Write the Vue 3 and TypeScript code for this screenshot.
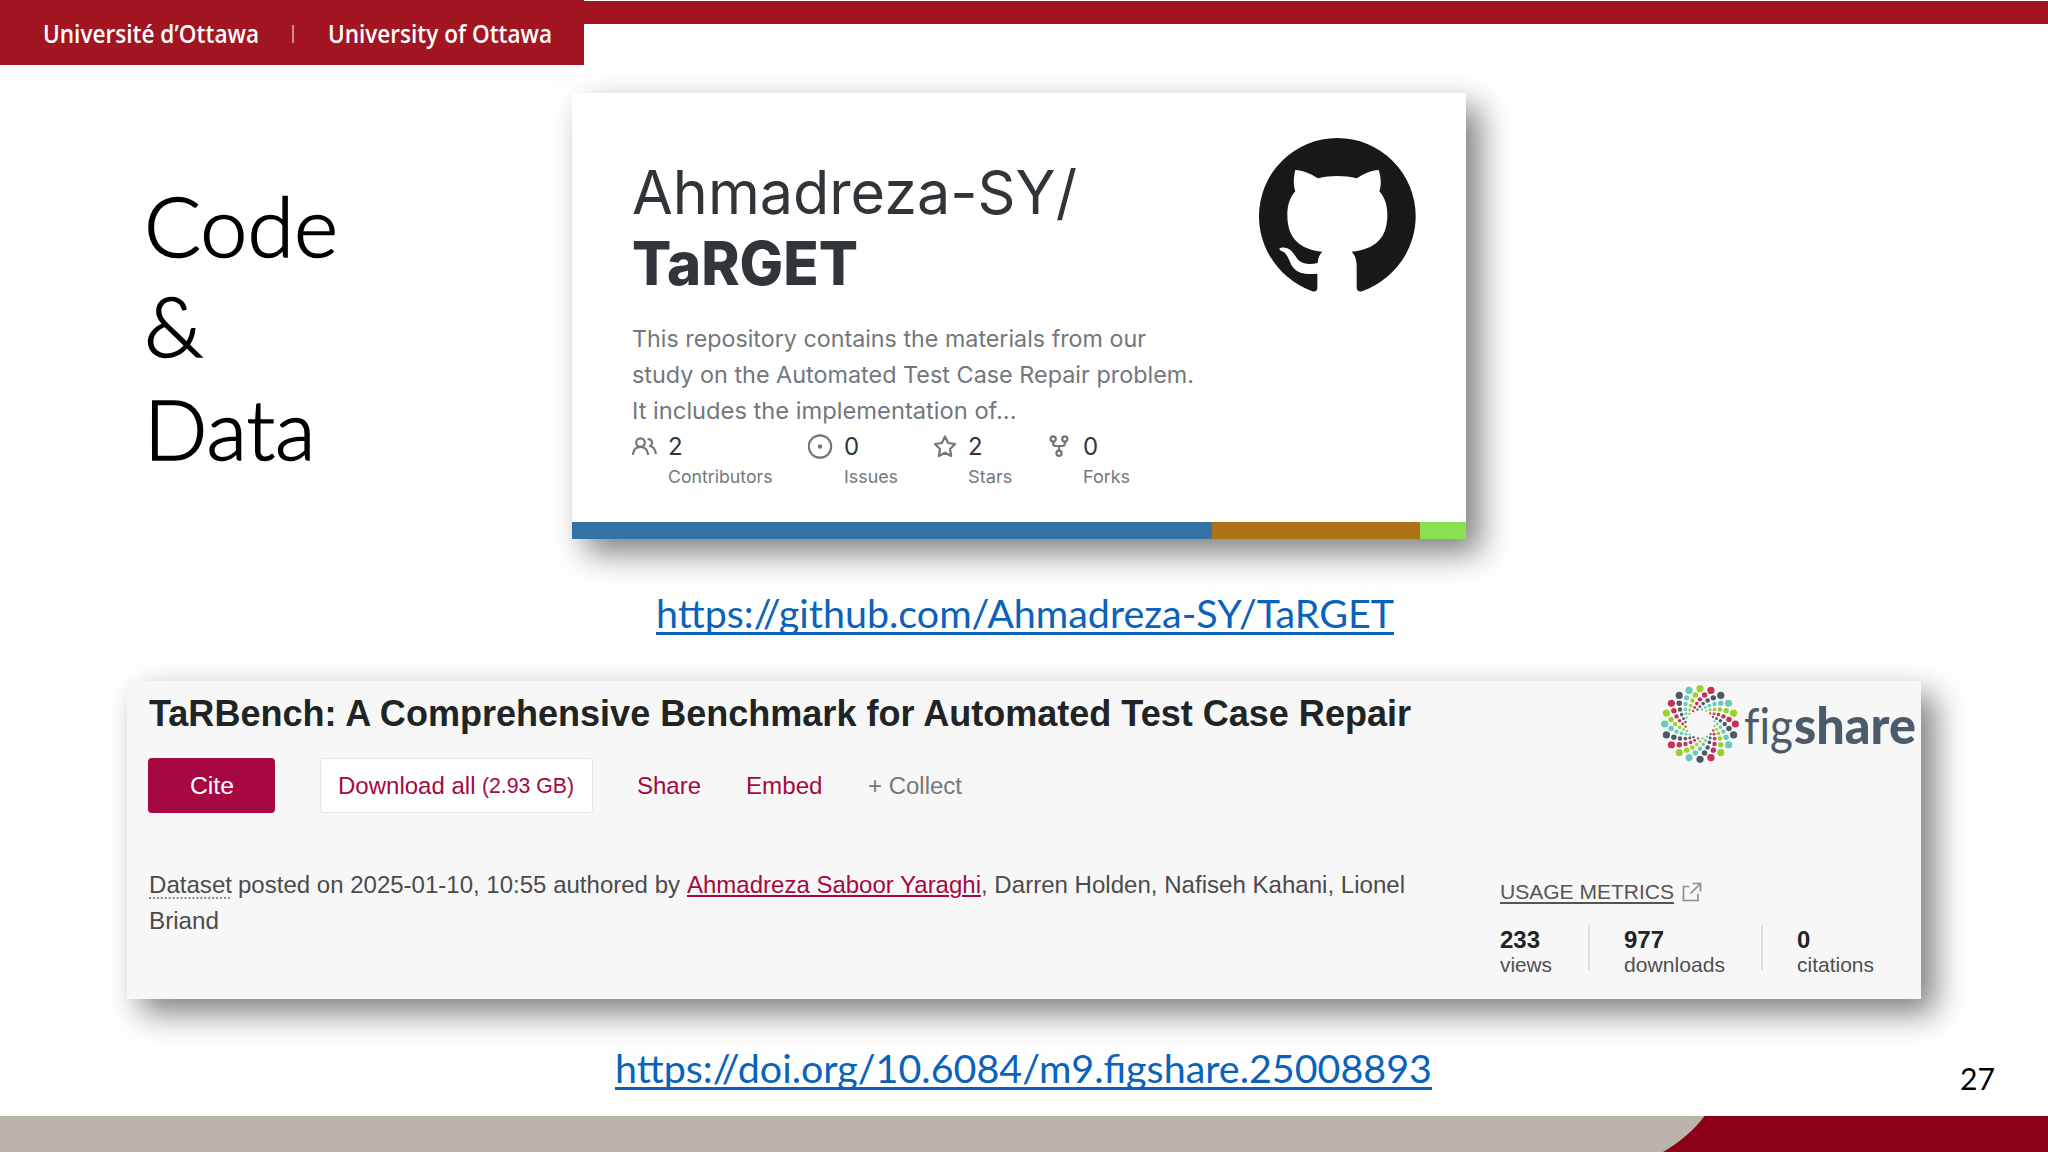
<script setup lang="ts">
interface Dot {
  x: number
  y: number
  r: number
  color: string
}

/** Stretches a single line of text horizontally to the given width in pixels. */
const vFit = {
  mounted(el: HTMLElement, binding: { value: number }) {
    const natural = el.getBoundingClientRect().width
    if (!natural) return
    el.style.transform = `scaleX(${binding.value / natural})`
    el.style.marginRight = `${binding.value - natural}px`
  },
}

const description = [
  { text: 'This repository contains the materials from our', width: 514 },
  { text: 'study on the Automated Test Case Repair problem.', width: 562 },
  { text: 'It includes the implementation of...', width: 384.5 },
]

const stats = [
  { icon: 'people', value: 2, label: 'Contributors', width: 104.5, cell: 176, indent: 36 },
  { icon: 'issue', value: 0, label: 'Issues', width: 54, cell: 125, indent: 36 },
  { icon: 'star', value: 2, label: 'Stars', width: 44.5, cell: 116, indent: 35 },
  { icon: 'fork', value: 0, label: 'Forks', width: 47, cell: 90, indent: 34 },
]

const languages = [
  { color: '#3572a5', width: 640 },
  { color: '#b07219', width: 208 },
  { color: '#89e051', width: 46 },
]

const metrics = [
  { value: '233', label: 'views', width: 52, numWidth: 40, cell: 88 },
  { value: '977', label: 'downloads', width: 101, numWidth: 40, cell: 137 },
  { value: '0', label: 'citations', width: 77, numWidth: 13.3, cell: 90 },
]

const palette = ['#9bd02c', '#c4315a', '#4d5a66', '#68ccb9']
const rings = [
  { radius: 106, turn: 0, r: 10.8 },
  { radius: 88, turn: -9, r: 8.2 },
  { radius: 74, turn: -18, r: 6.6 },
  { radius: 62, turn: -27, r: 5.4 },
  { radius: 52, turn: -36, r: 4.3 },
  { radius: 44, turn: -46, r: 3.5 },
]
const dots: Dot[] = []
for (let arm = 0; arm < 20; arm++) {
  for (const ring of rings) {
    const angle = ((arm * 18 + ring.turn) * Math.PI) / 180
    dots.push({
      x: Math.sin(angle) * ring.radius,
      y: -Math.cos(angle) * ring.radius,
      r: ring.r,
      color: palette[arm % 4],
    })
  }
}
</script>

<template>
  <main class="slide">
    <header class="top">
      <div class="brand">
        <span v-fit="216" class="fit">Université d’Ottawa</span>
        <i class="brand-sep"></i>
        <span v-fit="224" class="fit">University of Ottawa</span>
      </div>
      <div class="strip"></div>
    </header>

    <section class="code-row">
      <h1 class="title">
        <span v-fit="194" class="fit">Code</span>
        <span v-fit="59" class="fit amp">&amp;</span>
        <span v-fit="171.5" class="fit">Data</span>
      </h1>

      <article class="repo">
        <div class="repo-main">
          <div class="repo-text">
            <div class="repo-name"><span v-fit="445" class="fit">Ahmadreza-SY/</span></div>
            <div class="repo-name strong"><span v-fit="226" class="fit">TaRGET</span></div>
            <div class="desc">
              <div v-for="line in description" :key="line.text">
                <span v-fit="line.width" class="fit">{{ line.text }}</span>
              </div>
            </div>
            <div class="stats">
              <div v-for="s in stats" :key="s.label" class="stat" :style="{ width: s.cell + 'px' }">
                <div class="stat-icon" :style="{ width: s.indent + 'px' }">
                  <svg v-if="s.icon === 'people'" width="25" height="18" viewBox="0 0 25 18" class="line">
                    <circle cx="8.5" cy="5.6" r="4.3" />
                    <path d="M1 17c.6-4.500 3.500-7 7.500-7s6.900 2.500 7.500 7M16.500 2.200c3.800.2 5 5 1.500 6.800 3.500 1 5.200 3.700 5.800 7" />
                  </svg>
                  <svg v-else-if="s.icon === 'issue'" width="25" height="25" viewBox="0 0 25 25" class="line">
                    <circle cx="12" cy="12.500" r="11.200" />
                    <circle cx="12" cy="12.500" r="2.200" class="solid" />
                  </svg>
                  <svg v-else-if="s.icon === 'star'" width="24" height="23" viewBox="0 0 24 23" class="line">
                    <path d="M12 1.500l3.100 6.500 7 1-5.100 5 1.200 7-6.200-3.300-6.200 3.300 1.200-7-5.100-5 7-1z" />
                  </svg>
                  <svg v-else width="20" height="22" viewBox="0 0 20 22" class="line">
                    <circle cx="4.200" cy="4" r="2.600" />
                    <circle cx="15.800" cy="4" r="2.600" />
                    <circle cx="10" cy="18.300" r="2.600" />
                    <path d="M4.200 6.600v2.200q0 2.200 2.200 2.200h7.200q2.200 0 2.200-2.200V6.600M10 11v4.700" />
                  </svg>
                </div>
                <div>
                  <div class="stat-value">{{ s.value }}</div>
                  <div class="stat-label"><span v-fit="s.width" class="fit">{{ s.label }}</span></div>
                </div>
              </div>
            </div>
          </div>
          <svg class="mark" width="157" height="154" viewBox="297 174 471 462">
            <path d="M532 174A235 235 0 0 0 297 409C297 512 364 600 457 634Q471 637 472 624L472 581C440 585 414 580 400 563C390 551 388 535 375 519C370 513 360 514 358 507C359 502 372 501 382 505C400 513 404 528 415 540C428 553 450 555 473 549C474 535 478 524 487 515C420 508 382 476 382 405C382 375 390 352 406 334C399 314 401 290 406 270C428 270 452 281 474 295C510 286 554 286 590 295C612 281 634 270 656 270C663 290 665 314 658 334C674 352 682 375 682 405C682 476 644 508 575 515C585 524 590 540 590 558L590 622Q591 637 606 634C700 600 767 512 767 409A235 235 0 0 0 532 174Z" />
          </svg>
        </div>
        <div class="langs">
          <i v-for="l in languages" :key="l.color" :style="{ width: l.width + 'px', background: l.color }"></i>
        </div>
      </article>
    </section>

    <div class="link-row first">
      <a v-fit="738" class="fit url">https://github.com/Ahmadreza-SY/TaRGET</a>
    </div>

    <article class="dataset">
      <div class="ds-main">
        <h2><span v-fit="1262" class="fit">TaRBench: A Comprehensive Benchmark for Automated Test Case Repair</span></h2>
        <div class="actions">
          <div class="cite"><span v-fit="44" class="fit">Cite</span></div>
          <div class="download">
            <span v-fit="137.5" class="fit">Download all</span>
            <small v-fit="92" class="fit">(2.93 GB)</small>
          </div>
          <span v-fit="64" class="fit share">Share</span>
          <span v-fit="76.5" class="fit embed">Embed</span>
          <span v-fit="94" class="fit collect">+ Collect</span>
        </div>
        <div class="meta">
          <div class="meta-line">
            <span v-fit="83" class="fit dotted">Dataset</span>
            <span v-fit="442" class="fit posted">posted on 2025-01-10, 10:55 authored by</span>
            <a v-fit="294" class="fit author">Ahmadreza Saboor Yaraghi</a>
            <span v-fit="424" class="fit">, Darren Holden, Nafiseh Kahani, Lionel</span>
          </div>
          <div class="meta-line"><span v-fit="70" class="fit">Briand</span></div>
        </div>
      </div>

      <aside class="ds-side">
        <div class="logo">
          <svg width="78" height="78" viewBox="-117 -117 234 234">
            <circle v-for="(d, i) in dots" :key="i" :cx="d.x" :cy="d.y" :r="d.r" :fill="d.color" />
          </svg>
          <div class="logo-text">
            <span v-fit="49" class="fit thin">fig</span><span v-fit="122" class="fit heavy">share</span>
          </div>
        </div>
        <div class="usage">
          <span v-fit="174" class="fit under">USAGE METRICS</span>
          <svg width="20" height="20" viewBox="0 0 20 20">
            <path d="M7.500 4.500H1.500V18.500H16V12M10.500 1.500H18.500V9.500M18 2L8.500 11.500" fill="none" stroke="#8d8d8d" stroke-width="1.700" />
          </svg>
        </div>
        <div class="metrics">
          <template v-for="(m, i) in metrics" :key="m.label">
            <i v-if="i" class="divider"></i>
            <div class="metric" :style="{ width: m.cell + 'px' }">
              <div class="num"><span v-fit="m.numWidth" class="fit">{{ m.value }}</span></div>
              <div class="lab"><span v-fit="m.width" class="fit">{{ m.label }}</span></div>
            </div>
          </template>
        </div>
      </aside>
    </article>

    <div class="link-row second">
      <a v-fit="817" class="fit url">https://doi.org/10.6084/m9.figshare.25008893</a>
      <span v-fit="35" class="fit page">27</span>
    </div>

    <footer class="bottom">
      <svg width="2048" height="36" viewBox="0 0 2048 36">
        <rect width="2048" height="36" fill="#bab3ac" />
        <path d="M1704.500 0C1694 14 1680 26 1663 36H2048V0Z" fill="#8c0018" />
      </svg>
    </footer>
  </main>
</template>

<style>
html,
body {
  margin: 0;
  background: #fff;
}
</style>

<style scoped>
.slide {
  width: 2048px;
  height: 1152px;
  overflow: hidden;
  background: #fff;
  display: flex;
  flex-direction: column;
  font-family: 'Liberation Sans', Arial, sans-serif;
}
.fit {
  display: inline-block;
  flex: none;
  white-space: nowrap;
  transform-origin: 0 50%;
}
i {
  display: block;
}
.top {
  display: flex;
  height: 65px;
  flex: none;
}
.brand {
  box-sizing: border-box;
  width: 584px;
  height: 65px;
  padding: 18px 0 0 43px;
  background: #a31621;
  color: #fff;
  display: flex;
  font: 600 24.500px/32px 'Open Sans', 'Noto Sans', sans-serif;
}
.brand-sep {
  width: 2px;
  height: 18px;
  margin: 7px 34px 0 33px;
  background: #cf8a8e;
}
.strip {
  flex: 1;
  height: 23px;
  margin-top: 1px;
  background: #a31621;
}
.code-row {
  display: flex;
  height: 524px;
  flex: none;
}
.title {
  box-sizing: border-box;
  width: 572px;
  margin: 110px 0 0;
  padding-left: 143.500px;
  display: flex;
  flex-direction: column;
  align-items: flex-start;
  font: 300 83.5px/101.6px Lato, Carlito, sans-serif;
  color: #000;
  -webkit-text-stroke: 1.500px #000;
}
.amp {
  margin-top: -2px;
  margin-bottom: 2px;
}
.repo {
  width: 894px;
  height: 446px;
  margin-top: 28px;
  display: flex;
  flex-direction: column;
  background: #fff;
  box-shadow: 14px 14px 30px rgba(0, 0, 0, 0.5);
  font-family: Inter, sans-serif;
}
.repo-main {
  flex: 1;
  display: flex;
}
.repo-text {
  width: 627px;
  padding: 64px 0 0 60px;
}
.repo-name {
  height: 71.4px;
  font-size: 60px;
  line-height: 71.4px;
  color: #2f3539;
}
.strong {
  font-weight: 800;
}
.desc {
  margin-top: 21px;
  font-size: 23px;
  line-height: 36px;
  color: #71777c;
}
.desc > div {
  height: 36px;
}
.stats {
  display: flex;
  margin-top: 4px;
}
.stat {
  display: flex;
}
.stat-icon {
  height: 27px;
  flex: none;
  display: flex;
  align-items: center;
}
.line {
  display: block;
  fill: none;
  stroke: #71777c;
  stroke-width: 2.200;
  stroke-linejoin: round;
  stroke-linecap: round;
}
.solid {
  fill: #71777c;
  stroke: none;
}
.stat-value {
  font-size: 24px;
  line-height: 28px;
  color: #2f3539;
}
.stat-label {
  height: 24px;
  margin-top: 4px;
  font-size: 17.500px;
  line-height: 24px;
  color: #71777c;
}
.mark {
  display: block;
  margin-top: 45px;
  fill: #191717;
}
.langs {
  display: flex;
  height: 17px;
}
.link-row {
  display: flex;
  height: 48px;
  flex: none;
  font: 400 38px/48px Lato, Carlito, sans-serif;
}
.first {
  padding-left: 656px;
}
.second {
  margin-top: 45px;
  padding-left: 615px;
}
.url {
  color: #0b62bb;
  text-decoration: underline;
  text-decoration-thickness: 2.500px;
  text-underline-offset: 4px;
  text-decoration-skip-ink: none;
}
.page {
  margin-left: 527.500px;
  padding-top: 16px;
  font-size: 30px;
  line-height: 36px;
  color: #000;
}
.dataset {
  box-sizing: border-box;
  width: 1794px;
  height: 318px;
  flex: none;
  margin: 44px 0 0 127px;
  padding-left: 21px;
  display: flex;
  background: #f7f7f7;
  box-shadow: 14px 14px 30px rgba(0, 0, 0, 0.5);
}
.ds-main {
  width: 1352px;
  flex: none;
}
h2 {
  height: 42px;
  margin: 12px 0 0;
  padding-left: 1px;
  font-size: 36px;
  line-height: 42px;
  font-weight: 700;
  color: #202424;
}
.actions {
  display: flex;
  height: 55px;
  margin-top: 23px;
  font-size: 24.400px;
  line-height: 55px;
  color: #a60842;
}
.cite {
  width: 127px;
  display: flex;
  justify-content: center;
  border-radius: 4px;
  background: #a60842;
  color: #fff;
}
.download {
  box-sizing: border-box;
  width: 273px;
  margin-left: 45px;
  padding-left: 17px;
  display: flex;
  gap: 6px;
  border: 1px solid #e6e6e6;
  border-radius: 4px;
  background: #fff;
  line-height: 53px;
}
.download small {
  font-size: 22px;
}
.share {
  margin-left: 44px;
}
.embed {
  margin-left: 45px;
}
.collect {
  margin-left: 45px;
  color: #777;
}
.meta {
  margin-top: 54px;
  font-size: 24.400px;
  line-height: 36px;
  color: #4b4b4b;
}
.meta-line {
  display: flex;
  height: 36px;
  padding-left: 1px;
}
.dotted {
  text-decoration: underline dotted #8a8a8a 2px;
  text-underline-offset: 4px;
  text-decoration-skip-ink: none;
}
.posted {
  margin-left: 6px;
}
.author {
  margin-left: 7px;
  color: #a60842;
  text-decoration: underline;
  text-decoration-thickness: 2px;
  text-underline-offset: 2px;
}
.ds-side {
  flex: 1;
}
.logo {
  display: flex;
  height: 78px;
  margin: 4px 0 0 161px;
}
.logo-text {
  display: flex;
  margin-left: 5px;
  font: 400 51px/60px Lato, sans-serif;
  font-variant-ligatures: none;
  padding-top: 10px;
  color: #4c5b6b;
}
.heavy {
  font-weight: 900;
  margin-left: 1px;
}
.usage {
  display: flex;
  gap: 8px;
  align-items: center;
  height: 24px;
  margin-top: 117px;
  font-size: 21px;
  line-height: 24px;
  color: #555;
}
.under {
  text-decoration: underline;
  text-decoration-thickness: 1.500px;
  text-underline-offset: 3px;
  text-decoration-skip-ink: none;
}
.metrics {
  display: flex;
  margin-top: 21px;
}
.divider {
  width: 2px;
  height: 45px;
  margin-right: 34px;
  background: #dedede;
}
.num {
  height: 26px;
  margin-top: 2px;
  font-size: 24px;
  line-height: 26px;
  font-weight: 700;
  color: #202424;
}
.lab {
  height: 24px;
  font-size: 20.400px;
  line-height: 24px;
  color: #4f4f4f;
}
.bottom {
  height: 36px;
  flex: none;
  margin-top: auto;
}
.bottom svg {
  display: block;
}
</style>
